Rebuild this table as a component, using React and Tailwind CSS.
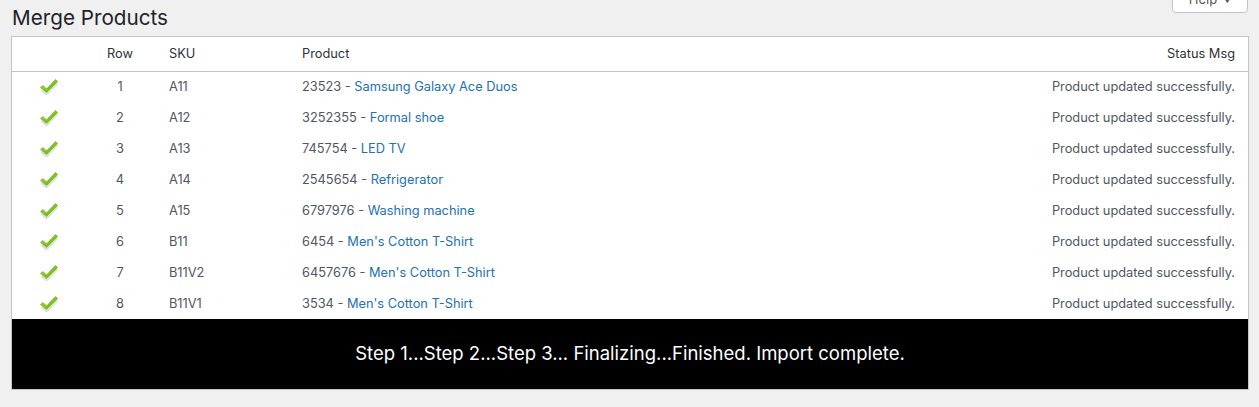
import React from "react";

const rows = [
  ["1", "A11", "23523", "Samsung Galaxy Ace Duos"],
  ["2", "A12", "3252355", "Formal shoe"],
  ["3", "A13", "745754", "LED TV"],
  ["4", "A14", "2545654", "Refrigerator"],
  ["5", "A15", "6797976", "Washing machine"],
  ["6", "B11", "6454", "Men's Cotton T-Shirt"],
  ["7", "B11V2", "6457676", "Men's Cotton T-Shirt"],
  ["8", "B11V1", "3534", "Men's Cotton T-Shirt"],
];

function Check() {
  return (
    <svg width="20" height="17" viewBox="0 0 20 17" className="block">
      <defs>
        <linearGradient id="cg" x1="0" y1="0" x2="1" y2="1">
          <stop offset="0" stopColor="#a8ea2a" />
          <stop offset="1" stopColor="#5aa804" />
        </linearGradient>
      </defs>
      <path d="M2 11 L7 15.5 L18 4" fill="none" stroke="#c8c8c8" strokeWidth="2" opacity="0.6" transform="translate(0.5,1)" />
      <path d="M1.5 9.5 L4 7.5 L7.5 11 L16.5 1.5 L18.5 3.5 L7.5 14.5 Z" fill="url(#cg)" stroke="#62a40a" strokeWidth="0.6" strokeLinejoin="round" />
    </svg>
  );
}

export default function App() {
  return (
    <div className="min-h-[407px] bg-[#f0f0f1] text-[#50575e]" style={{ fontFamily: "Inter, 'Liberation Sans', sans-serif" }}>
      <div className="flex justify-between items-start h-[36px] pl-[12px] pr-[11px]">
        <h1 className="text-[20.7px] leading-[36px] text-[#1d2327] font-normal">Merge Products</h1>
        <div className="mt-[-13px] h-[26px] w-[76px] bg-white border border-[#c3c4c7] rounded-b-[4px] flex items-center justify-center gap-[6px] text-[13px] text-[#50575e]">
          <span>Help</span>
          <span className="text-[8px]">▼</span>
        </div>
      </div>
      <div className="ml-[11px] mr-[10px] border border-[#c3c4c7] bg-white">
        <table className="w-full border-collapse text-[12.8px] table-fixed">
          <thead>
            <tr className="h-[34px] border-b border-[#c3c4c7] text-[#2c3338]">
              <th className="w-[72px] font-normal"></th>
              <th className="w-[72px] font-normal text-center">Row</th>
              <th className="w-[133px] font-normal text-left pl-[13px]">SKU</th>
              <th className="font-normal text-left pl-[13px]">Product</th>
              <th className="w-[300px] font-normal text-right pr-[13px]">Status Msg</th>
            </tr>
          </thead>
          <tbody>
            {rows.map((r) => (
              <tr key={r[0]} className="h-[31px]">
                <td>
                  <div className="flex justify-center pl-[1px]">
                    <Check />
                  </div>
                </td>
                <td className="text-center">{r[0]}</td>
                <td className="pl-[13px]">{r[1]}</td>
                <td className="pl-[13px]">
                  {r[2]} - <span className="text-[#2271b1]">{r[3]}</span>
                </td>
                <td className="text-right pr-[13px]">Product updated successfully.</td>
              </tr>
            ))}
          </tbody>
        </table>
        <div className="h-[70px] bg-black text-white text-[18.5px] flex items-center justify-center">
          Step 1...Step 2...Step 3... Finalizing...Finished. Import complete.
        </div>
      </div>
    </div>
  );
}
